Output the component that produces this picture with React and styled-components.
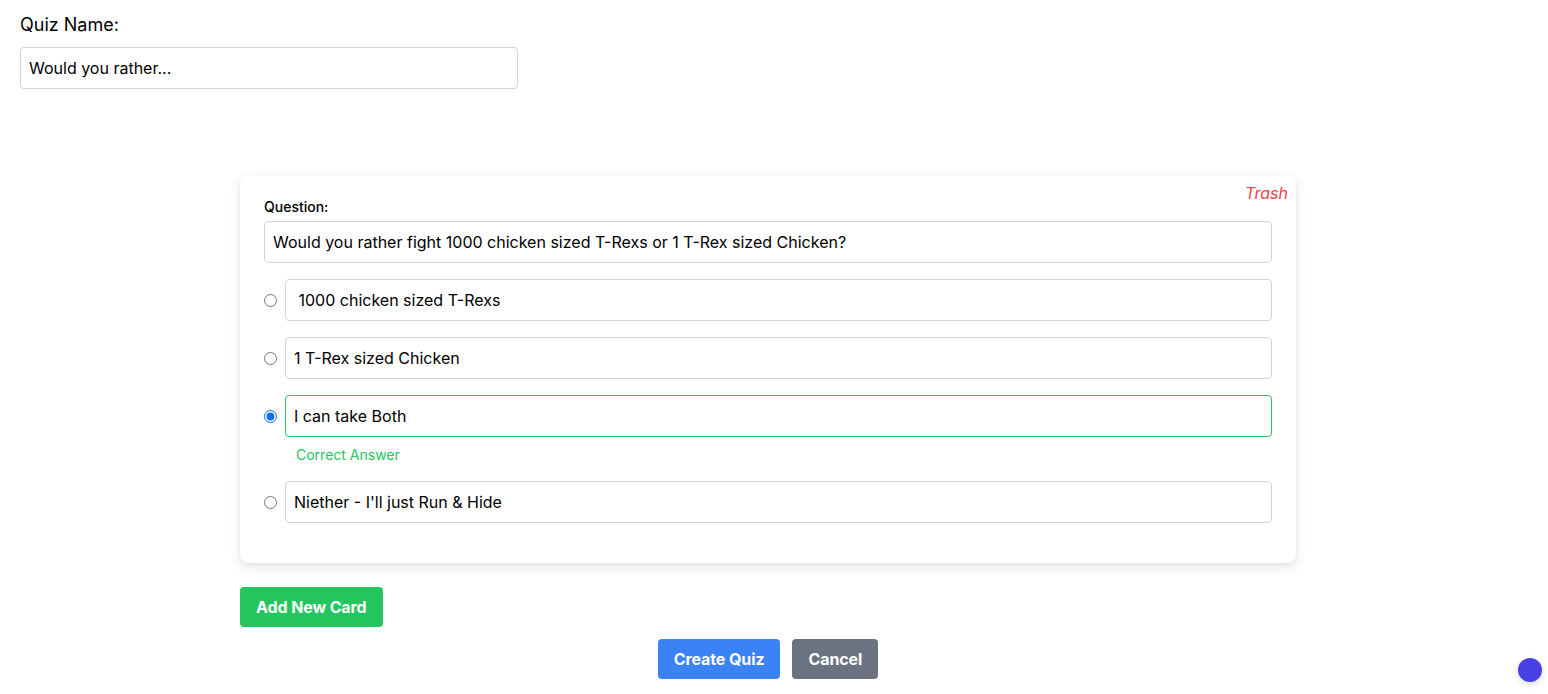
import React from 'react'
import styled, { createGlobalStyle } from 'styled-components'

const GlobalStyle = createGlobalStyle`
    * {
        box-sizing: border-box;
    }
    body {
        margin: 0;
        font-family: Inter, "Noto Sans", sans-serif;
        color: #000;
        background: #fff;
    }
`

const Page = styled.div`
    padding: 11px 20px 15px;
`

const QuizLabel = styled.label`
    display: block;
    font-size: 18px;
    line-height: 28px;
    font-weight: 400;
    margin-bottom: 8px;
`

const TextInput = styled.input`
    display: block;
    width: ${(p) => p.$width || '100%'};
    height: 42px;
    padding: 8px;
    font-family: inherit;
    font-size: 16px;
    line-height: 24px;
    color: #000;
    border: 1px solid ${(p) => (p.$correct ? '#22c55e' : '#d1d5db')};
    border-radius: 4px;
    outline: none;
    background: #fff;
`

const Main = styled.div`
    width: 1056px;
    margin: 86px 0 0 220px;
`

const Card = styled.div`
    position: relative;
    background: #fff;
    border-radius: 8px;
    padding: 24px 24px 24px;
    box-shadow: 0 4px 12px rgba(0, 0, 0, 0.1), 0 1px 4px rgba(0, 0, 0, 0.04);
`

const Trash = styled.button`
    position: absolute;
    top: 6px;
    right: 8px;
    border: 0;
    background: none;
    padding: 0;
    font-family: inherit;
    font-size: 16px;
    line-height: 24px;
    font-style: italic;
    color: #ef4444;
    cursor: pointer;
`

const QuestionLabel = styled.label`
    display: block;
    font-size: 14px;
    line-height: 16px;
    font-weight: 500;
    margin-bottom: 6px;
`

const Options = styled.div`
    margin-top: 16px;
`

const Option = styled.div`
    margin-bottom: 16px;
`

const OptionRow = styled.div`
    display: flex;
    align-items: center;
`

const Radio = styled.input`
    width: 13px;
    height: 13px;
    margin: 0 8px 0 0;
    flex: 0 0 auto;
    accent-color: #0b6ef7;
`

const CorrectNote = styled.div`
    margin: 8px 0 0 32px;
    font-size: 14px;
    line-height: 20px;
    color: #22c55e;
`

const Button = styled.button`
    height: 40px;
    padding: 0 16px;
    border: 0;
    border-radius: 4px;
    font-family: inherit;
    font-size: 16px;
    font-weight: 700;
    letter-spacing: -0.1px;
    color: #fff;
    background: ${(p) => p.$bg};
    cursor: pointer;
`

const AddRow = styled.div`
    margin-top: 24px;
`

const Actions = styled.div`
    display: flex;
    justify-content: center;
    gap: 12px;
    margin-top: 12px;
`

const Dot = styled.div`
    position: fixed;
    left: 1518px;
    top: 658px;
    width: 24px;
    height: 24px;
    border-radius: 50%;
    background: #4840e2;
    box-shadow: 0 2px 6px rgba(0, 0, 0, 0.15);
`

const options = [
    { text: ' 1000 chicken sized T-Rexs' },
    { text: '1 T-Rex sized Chicken' },
    { text: 'I can take Both', correct: true },
    { text: "Niether - I'll just Run & Hide" },
]

export default function App() {
    return (
        <Page>
            <GlobalStyle />
            <QuizLabel>Quiz Name:</QuizLabel>
            <TextInput $width="498px" defaultValue="Would you rather..." />
            <Main>
                <Card>
                    <Trash>Trash</Trash>
                    <QuestionLabel>Question:</QuestionLabel>
                    <TextInput defaultValue="Would you rather fight 1000 chicken sized T-Rexs or 1 T-Rex sized Chicken?" />
                    <Options>
                        {options.map((o, i) => (
                            <Option key={i}>
                                <OptionRow>
                                    <Radio type="radio" name="answer" defaultChecked={o.correct} />
                                    <TextInput $correct={o.correct} defaultValue={o.text} />
                                </OptionRow>
                                {o.correct && <CorrectNote>Correct Answer</CorrectNote>}
                            </Option>
                        ))}
                    </Options>
                </Card>
                <AddRow>
                    <Button $bg="#22c55e">Add New Card</Button>
                </AddRow>
                <Actions>
                    <Button $bg="#3b82f6">Create Quiz</Button>
                    <Button $bg="#6b7280">Cancel</Button>
                </Actions>
            </Main>
            <Dot />
        </Page>
    )
}
